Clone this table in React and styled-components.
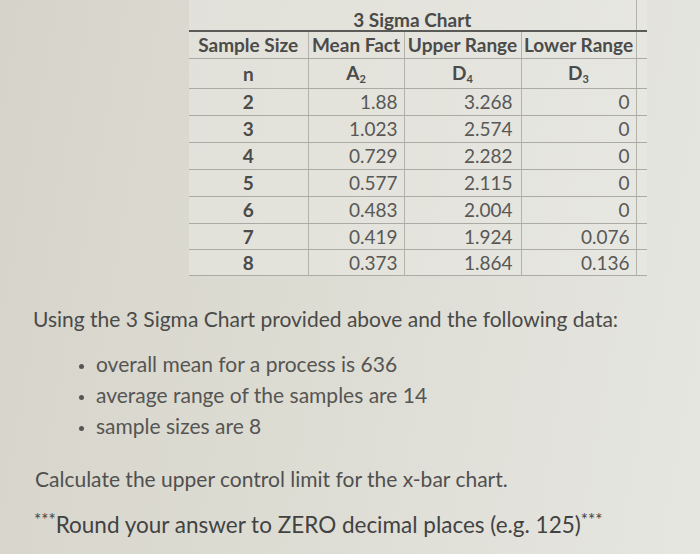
import styled, { createGlobalStyle } from "styled-components"

var rows = [
  ["2", "1.88", "3.268", "0"],
  ["3", "1.023", "2.574", "0"],
  ["4", "0.729", "2.282", "0"],
  ["5", "0.577", "2.115", "0"],
  ["6", "0.483", "2.004", "0"],
  ["7", "0.419", "1.924", "0.076"],
  ["8", "0.373", "1.864", "0.136"],
]

var bullets = [
  "overall mean for a process is 636",
  "average range of the samples are 14",
  "sample sizes are 8",
]

var App = () => (
  <Page>
    <Global />
    <Sheet>
      <colgroup>
        <col style={{ width: 119 }} />
        <col style={{ width: 96 }} />
        <col style={{ width: 117 }} />
        <col style={{ width: 115 }} />
        <col style={{ width: 11 }} />
      </colgroup>
      <tbody>
        <TitleRow>
          <Title colSpan={4}>3 Sigma Chart</Title>
          <Edge />
        </TitleRow>
        <HeadRow>
          <Head>Sample Size</Head>
          <Head>Mean Fact</Head>
          <Head>Upper Range</Head>
          <Head>Lower Range</Head>
          <Edge />
        </HeadRow>
        <Row $h={30}>
          <Head>n</Head>
          <Head>A<sub>2</sub></Head>
          <Head>D<sub>4</sub></Head>
          <Head>D<sub>3</sub></Head>
          <Edge />
        </Row>
        {rows.map((r, i) => (
          <Row key={r[0]} $h={i < 5 ? 27 : 26}>
            <Head>{r[0]}</Head>
            <Num>{r[1]}</Num>
            <Num $pad={8}>{r[2]}</Num>
            <Num>{r[3]}</Num>
            <Edge />
          </Row>
        ))}
      </tbody>
    </Sheet>

    <Question>
      <Lead>Using the 3 Sigma Chart provided above and the following data:</Lead>
      <List>
        {bullets.map((b) => <li key={b}>{b}</li>)}
      </List>
      <Ask>Calculate the upper control limit for the x-bar chart.</Ask>
      <Note><Stars>***</Stars>Round your answer to ZERO decimal places (e.g. 125)<Stars>***</Stars></Note>
    </Question>
  </Page>
)

var Global = createGlobalStyle`
html, body { margin: 0; height: 100%; }
body {
  background: linear-gradient(100deg, #d6d4ca 0%, #dddcd3 45%, #e6e6e1 100%);
  font-family: Lato, "Open Sans", sans-serif;
  color: #4a4a48;
  overflow: hidden;
}
`

var Page = styled.div`
width: 700px;
height: 554px;
`

var Sheet = styled.table`
margin-left: 189px;
border-collapse: collapse;
table-layout: fixed;
width: 458px;
background: rgba(236, 236, 230, 0.45);

td {
  padding: 0 2px;
  border-bottom: 1px solid #abaaa3;
  border-right: 1px solid #b4b3ab;
  font-size: 19px;
  line-height: 1;
  white-space: nowrap;
}
td:last-child { border-right: none; }
sub { font-size: 11px; vertical-align: -3px; }
`

var Row = styled.tr`
height: ${(p) => p.$h}px;
`

var TitleRow = styled.tr`
height: 31px;
td { border-bottom: 2px solid #5a5a56; border-right: none; }
td:first-child { border-right: 1px solid #b4b3ab; }
`

var HeadRow = styled.tr`
height: 27px;
`

var Title = styled.td`
text-align: center;
font-weight: 700;
vertical-align: bottom;
padding-bottom: 1px !important;
`

var Head = styled.td`
text-align: center;
font-weight: 700;
color: #4b4b49;
`

var Num = styled.td`
text-align: right;
color: #585856;
padding-right: ${(p) => p.$pad || 6}px !important;
`

var Edge = styled.td``

var Question = styled.div`
padding: 30px 0 0 33px;
font-size: 21px;
color: #4a4a48;
`

var Lead = styled.p`
margin: 0;
`

var List = styled.ul`
margin: 17px 0 0;
padding-left: 63px;
color: #555553;

li { line-height: 31px; }
li::marker { font-size: 15px; }
`

var Ask = styled.p`
margin: 25px 0 0 2px;
color: #505050;
`

var Note = styled.p`
margin: 18px 0 0 1px;
font-size: 22.5px;
color: #424242;
`

var Stars = styled.span`
font-size: 17px;
vertical-align: 7px;
`

export default App
